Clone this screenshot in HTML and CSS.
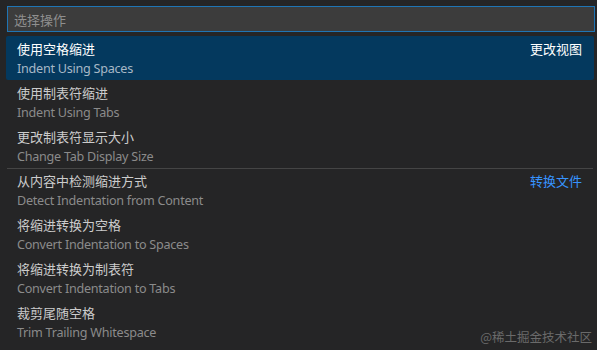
FILE: index.html
```html
<!DOCTYPE html>
<html lang="zh-CN">
<head>
<meta charset="utf-8">
<title>选择操作</title>
<link rel="stylesheet" href="styles.css">
</head>
<body>
<div class="quick-input">
  <div class="input-box"><span class="placeholder">选择操作</span></div>
  <ul class="list">
    <li class="row selected">
      <div class="main"><span class="label">使用空格缩进</span><span class="desc">Indent Using Spaces</span></div>
      <span class="tag">更改视图</span>
    </li>
    <li class="row">
      <div class="main"><span class="label">使用制表符缩进</span><span class="desc">Indent Using Tabs</span></div>
    </li>
    <li class="row">
      <div class="main"><span class="label">更改制表符显示大小</span><span class="desc">Change Tab Display Size</span></div>
    </li>
    <li class="row separated">
      <div class="main"><span class="label">从内容中检测缩进方式</span><span class="desc">Detect Indentation from Content</span></div>
      <span class="tag link">转换文件</span>
    </li>
    <li class="row">
      <div class="main"><span class="label">将缩进转换为空格</span><span class="desc">Convert Indentation to Spaces</span></div>
    </li>
    <li class="row">
      <div class="main"><span class="label">将缩进转换为制表符</span><span class="desc">Convert Indentation to Tabs</span></div>
    </li>
    <li class="row">
      <div class="main"><span class="label">裁剪尾随空格</span><span class="desc">Trim Trailing Whitespace</span></div>
    </li>
  </ul>
  <div class="watermark">@稀土掘金技术社区</div>
</div>
</body>
</html>
```
FILE: styles.css
```css
html, body {
  margin: 0;
  padding: 0;
  background: #252526;
  height: 100%;
  overflow: hidden;
}
body {
  font-family: "Noto Sans", "Noto Sans CJK SC", sans-serif;
  font-size: 13px;
  color: #cccccc;
}
.quick-input {
  position: relative;
  height: 350px;
  padding: 6px 2px 0 6px;
  box-sizing: border-box;
}
.input-box {
  margin-left: 1px;
  height: 26px;
  box-sizing: border-box;
  border: 1px solid #1f75b5;
  background: #3c3c3c;
  display: flex;
  align-items: center;
  padding-left: 6px;
}
.placeholder {
  color: #8f8f8f;
  font-family: "Noto Sans CJK SC", sans-serif;
  font-size: 13px;
}
.list {
  list-style: none;
  margin: 4px 0 0 0;
  padding: 0;
  width: 588px;
}
.row {
  display: flex;
  justify-content: space-between;
  align-items: flex-start;
  padding: 2px 12px 2px 11px;
  height: 44px;
  box-sizing: border-box;
}
.row.selected {
  background: #04395e;
  border-radius: 2px;
}
.row.separated {
  border-top: 1px solid #454545;
  margin: 0 1px;
  padding-top: 1px;
  padding-left: 10px;
  padding-right: 11px;
}
.main {
  display: flex;
  flex-direction: column;
}
.label {
  font-family: "Noto Sans CJK SC", sans-serif;
  line-height: 22px;
  color: #cccccc;
}
.desc {
  font-size: 12.6px;
  letter-spacing: -0.25px;
  line-height: 18px;
  color: #8b8b8b;
}
.selected .label { color: #ffffff; }
.selected .desc { color: #a7b8c6; }
.tag {
  font-family: "Noto Sans CJK SC", sans-serif;
  line-height: 22px;
  color: #ffffff;
}
.tag.link { color: #3794ff; }
.watermark {
  position: absolute;
  right: 5px;
  bottom: 4px;
  font-family: "Noto Sans CJK SC", sans-serif;
  font-size: 12.5px;
  color: #6a6a6a;
}
```
